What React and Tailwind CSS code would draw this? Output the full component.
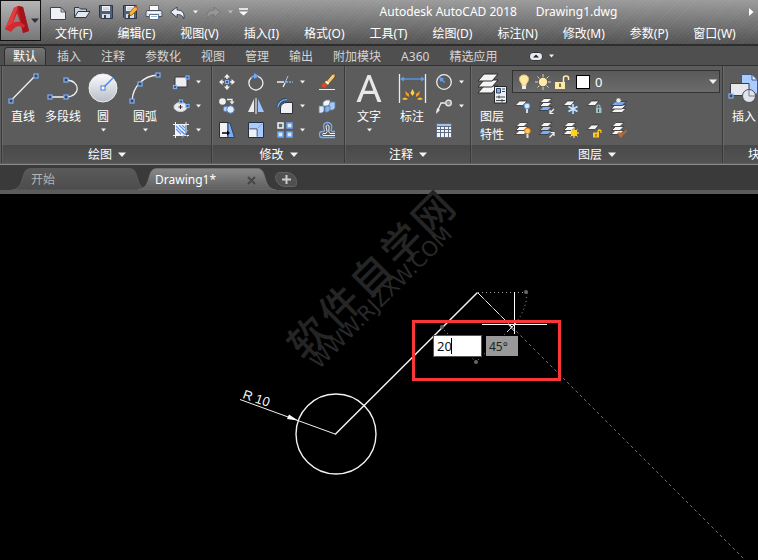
import React from "react";

const FONT = "font-['Noto_Sans','Noto_Sans_CJK_SC',sans-serif]";

/* ---------- shared drawing helpers ---------- */

function Svg({ w = 18, h = 18, children }) {
  return (
    <svg width={w} height={h} viewBox={`0 0 ${w} ${h}`} fill="none" aria-hidden="true" className="block shrink-0">
      {children}
    </svg>
  );
}

function Grip({ x, y, s = 4 }) {
  return <rect x={x - s / 2} y={y - s / 2} width={s} height={s} fill="#3d4652" stroke="#7db0ff" strokeWidth="1.2" />;
}

function Caret({ big, color = "#f2f2f2" }) {
  return big ? (
    <Svg w={8} h={5}>
      <path d="M0 .5H8L4 5Z" fill={color} />
    </Svg>
  ) : (
    <Svg w={5} h={4}>
      <path d="M0 .5H5L2.5 3.5Z" fill={color} />
    </Svg>
  );
}

function Sheets({ top = "#f6f6f6", mid = "#f6f6f6", bottom = "#f6f6f6", y = 0 }) {
  return (
    <g transform={`translate(0 ${y})`} stroke="#333" strokeWidth=".8">
      <path d="M1 13.5 5 9.5H14L10 13.5Z" fill={bottom} />
      <path d="M1.500 9.5 5.500 5.5H14L10 9.5Z" fill={mid} />
      <path d="M2 5.5 6 1.5H14L10 5.5Z" fill={top} />
    </g>
  );
}

const Sheet = () => <path d="M1 8.500 5.500 4H13L9 8.500Z" fill="#f4f4f4" stroke="#333" strokeWidth=".8" />;

/* ---------- quick access icons ---------- */

const NewIcon = () => (
  <Svg>
    <path d="M1.500 4.500H12L16.500 9V16.500H1.500Z" fill="#f0f1f4" stroke="#3c4250" />
    <path d="M12 4.500V9H16.500Z" fill="#c2c7d2" stroke="#3c4250" strokeWidth=".8" />
  </Svg>
);
const OpenIcon = () => (
  <Svg>
    <path d="M1.500 14V4.500H6L7.500 6H13.500V8.500" fill="#c8d0dc" stroke="#303744" />
    <path d="M1.500 14.500 5 8.500H17L13 14.500Z" fill="#e4e8ef" stroke="#303744" />
  </Svg>
);
const DiskBody = () => (
  <>
    <path d="M2.500 2.500H15.500V15.500H4L2.500 14Z" fill="#4f5f78" stroke="#2c3647" />
    <path d="M5 3H13V8H5Z" fill="#f2f4f7" />
    <path d="M6 5H12M6 6.700H12" stroke="#a7afbc" strokeWidth=".7" />
    <path d="M5 11H13V15H5Z" fill="#d5dbe5" />
    <path d="M7 12H9V15H7Z" fill="#344156" />
  </>
);
const SaveIcon = () => (
  <Svg>
    <DiskBody />
  </Svg>
);
const SaveAsIcon = () => (
  <Svg>
    <DiskBody />
    <path d="M7.500 13 8.500 9.500 14 3.500 17 6 11 12Z" fill="#f4b53c" stroke="#8b5a14" strokeWidth=".8" />
    <path d="M14 3.500 15 2.500 17.500 5 17 6Z" fill="#e25a45" />
    <path d="M7.500 13 8 11 9.500 12.300Z" fill="#222" />
  </Svg>
);
const PrintIcon = () => (
  <Svg>
    <path d="M4.500 2.500H13.500V8H4.500Z" fill="#fafafa" stroke="#556" strokeWidth=".8" />
    <path d="M2 7.500H16L17 9V13.500H1V9Z" fill="#dfe4ec" stroke="#4a5260" />
    <path d="M4.500 11.500H13.500V16.500H4.500Z" fill="#fff" stroke="#5b6f91" />
    <path d="M6 13.500H12" stroke="#8eb4ea" />
    <path d="M3 9.500H15" stroke="#fff" />
  </Svg>
);
const UndoIcon = ({ flip, fill = "#eceef2", stroke = "#3e4656" }) => (
  <Svg>
    <path
      transform={flip ? "matrix(-1 0 0 1 18 0)" : undefined}
      d="M1.500 9 8 4V7C13 7 16 9.500 14.800 16C13.500 12.500 12 11.500 8 11.500V14.500Z"
      fill={fill}
      stroke={stroke}
    />
  </Svg>
);

/* ---------- draw panel icons ---------- */

const LineIcon = () => (
  <Svg w={32} h={32}>
    <path d="M4 28.500 28 4" stroke="#f2f2f2" strokeWidth="1.300" />
    <Grip x={4} y={29} />
    <Grip x={29} y={4} />
  </Svg>
);
const PolyIcon = () => (
  <Svg w={32} h={32}>
    <path d="M3 25H19C34 25 34 8 19 8" stroke="#f2f2f2" strokeWidth="1.300" />
    <Grip x={3} y={25} />
    <Grip x={19} y={25} />
    <Grip x={19} y={8} />
  </Svg>
);
const CircleIcon = () => (
  <Svg w={32} h={32}>
    <defs>
      <linearGradient id="disc" x1="0" y1="0" x2="0" y2="1">
        <stop offset="0" stopColor="#fafbfd" />
        <stop offset="1" stopColor="#b9bdc8" />
      </linearGradient>
    </defs>
    <circle cx="16" cy="16" r="14" fill="url(#disc)" stroke="#e9ebf0" />
    <path d="M16 16 26 6" stroke="#3c7fe6" strokeWidth="1.300" />
    <rect x="14" y="14" width="4" height="4" fill="#fff" stroke="#3c7fe6" />
  </Svg>
);
const ArcIcon = () => (
  <Svg w={32} h={32}>
    <path d="M3 29C4 14 14 4 29 3" stroke="#f2f2f2" strokeWidth="1.300" />
    <Grip x={3} y={29} />
    <Grip x={11} y={12} />
    <Grip x={29} y={3} />
  </Svg>
);
const RectIcon = () => (
  <Svg>
    <path d="M3 4H15V14H3Z" fill="#eceef2" stroke="#34383f" />
    <Grip x={3} y={14} s={3} />
    <Grip x={15.500} y={4.500} s={3} />
  </Svg>
);
const EllipseIcon = () => (
  <Svg>
    <ellipse cx="8.500" cy="10" rx="6.500" ry="4.500" fill="#e9ebf0" stroke="#d0d3da" />
    <path d="M8.500 8V12M6.500 10H10.500" stroke="#333" />
    <Grip x={9} y={4.500} s={3} />
    <Grip x={15.500} y={9} s={3} />
  </Svg>
);
const HatchIcon = () => (
  <Svg>
    <path d="M4 4H13V14H4Z" fill="#f4f7fc" />
    <path d="M4 8 9 13M4 5 12 13M7 4 13 10M10 4 13 7" stroke="#5c97ed" strokeWidth="1.200" />
    <path d="M1 3.500H17M1 14.500H17M3.500 1V17M14 1V12" stroke="#f2f2f2" />
    <path d="M10 17 16 9M10 10 16 16" stroke="#6fa7f8" />
  </Svg>
);

/* ---------- modify panel icons ---------- */

const MoveIcon = () => (
  <Svg>
    <path d="M9 1 12 4.500H6ZM9 17 6 13.500H12ZM1 9 4.500 6V12ZM17 9 13.500 12V6Z" fill="#f0f0f0" />
    <path d="M9 4V6M9 12V14M4 9H6M12 9H14" stroke="#f0f0f0" strokeWidth="1.500" />
    <Grip x={9} y={9} s={3} />
  </Svg>
);
const RotateIcon = () => (
  <Svg>
    <path d="M11 3.300A7 7 0 1 1 4.500 4.500" stroke="#ececec" strokeWidth="1.300" />
    <path d="M7 0 12 3 7 6Z" fill="#6ea8fb" />
    <path d="M4 5C5 3.500 6 3 8 3" stroke="#6ea8fb" strokeWidth="1.500" />
  </Svg>
);
const TrimIcon = () => (
  <Svg>
    <path d="M1 9H8M7 14 9 10" stroke="#f0f0f0" strokeWidth="1.300" />
    <path d="M9 10 12 3" stroke="#9ec4ff" />
    <path d="M10 9H17" stroke="#78acf8" strokeWidth="1.300" strokeDasharray="2 1" />
  </Svg>
);
const EraseIcon = () => (
  <Svg>
    <path d="M7 10 14 1.500 17 .5V4L10 12Z" fill="#f2cb78" stroke="#5c421b" strokeWidth=".8" />
    <path d="M7.500 8.500 10.500 11" stroke="#fff" strokeWidth="1.800" />
    <path d="M4 11 7 9.500 9.500 12 7 15 3.500 14Z" fill="#d64b1f" />
    <path d="M1 16.500H17" stroke="#eee" />
  </Svg>
);
const CopyIcon = () => (
  <Svg>
    <circle cx="4.500" cy="4.500" r="3.300" fill="#f0f1f4" />
    <circle cx="8" cy="12" r="2.800" fill="#b5d2ff" stroke="#577db5" />
    <circle cx="12.500" cy="12.500" r="3.800" fill="#dcebff" stroke="#577db5" />
    <path d="M9 2.500H14V5" stroke="#eee" strokeWidth="1.300" />
    <path d="M11.500 4.500H16.500L14 7.500Z" fill="#eee" />
  </Svg>
);
const MirrorIcon = () => (
  <Svg>
    <path d="M7 2V15H1Z" fill="#e7eaf0" />
    <path d="M11 2V15H17Z" fill="#9cc4ff" />
    <path d="M9 1V17" stroke="#fff" />
  </Svg>
);
const FilletIcon = () => (
  <Svg>
    <path d="M4.500 16.500V11Q5 5.500 11 5.500H16.500V16.500Z" fill="#eef0f4" stroke="#2e3238" />
    <path d="M2 10Q3 3 11 2.500" stroke="#23385c" strokeWidth="3" />
    <path d="M2 10Q3 3 11 2.500" stroke="#72a9fa" strokeWidth="1.500" />
  </Svg>
);
const ExplodeIcon = () => (
  <Svg>
    <path d="M1 9H6V14L4 16H1Z" fill="#d5e5fb" stroke="#687d99" strokeWidth=".8" />
    <path d="M5 5 8 3H12V7L10 9H5Z" fill="#eff4fb" stroke="#687d99" strokeWidth=".8" />
    <path d="M11 7 13 5H17V11L15 13H11Z" fill="#a5c8f7" stroke="#687d99" strokeWidth=".8" />
    <path d="M7 10 9 9H12V13L10 15H7Z" fill="#7eb0f3" stroke="#687d99" strokeWidth=".8" />
  </Svg>
);
const StretchIcon = () => (
  <Svg>
    <path d="M1.500 1.500H10V16.500H1.500Z" fill="#f1f2f5" stroke="#2b2f36" />
    <path d="M10 2H12L16.500 16.500H10Z" fill="#78acf5" stroke="#2c4164" />
    <path d="M4 12H10" stroke="#000" strokeWidth="1.500" />
    <path d="M9 9.500 12 12 9 14.500Z" fill="#000" />
  </Svg>
);
const ScaleIcon = () => (
  <Svg>
    <path d="M1.500 1.500H16.500V16.500H1.500Z" fill="#a9caff" stroke="#26303f" />
    <path d="M2.500 8H10V15.500" stroke="#333c49" />
    <path d="M2 8.500H9.500V16H2Z" fill="#edf0f5" />
    <path d="M11 7 15 3" stroke="#7ba7e5" />
  </Svg>
);
const ArrayIcon = () => (
  <Svg>
    <rect x="2" y="2" width="5" height="5" fill="#596678" stroke="#f4f4f4" strokeWidth="1.500" />
    <rect x="11" y="2" width="5" height="5" fill="#d8e8ff" stroke="#69a2f5" strokeWidth="1.500" />
    <rect x="2" y="11" width="5" height="5" fill="#d8e8ff" stroke="#69a2f5" strokeWidth="1.500" />
    <rect x="11" y="11" width="5" height="5" fill="#d8e8ff" stroke="#69a2f5" strokeWidth="1.500" />
  </Svg>
);
const OffsetIcon = () => (
  <Svg>
    <path d="M17 16.500H4Q1.500 16.500 1.500 13.500T4 10.500H6Q7 10 6 8Q4 2 9.500 1.500Q15 2 13.500 8Q12.500 10 14 10.500H17" stroke="#76abfa" strokeWidth="1.300" />
    <path d="M17 14.500H5Q4 13.500 5 12.500H8Q10 11 8.500 8Q7 4 9.500 4T11 8Q10 11 12 12.500H17" stroke="#f0f0f0" />
  </Svg>
);

/* ---------- annotation icons ---------- */

const TextIcon = () => (
  <Svg w={32} h={32}>
    <path d="M3.500 30 14.500 3H17.500L28.500 30H24.500L21.500 22H10.500L7.500 30ZM11.700 18.800H20.300L16 7.200Z" fill="#e8e8e8" fillRule="evenodd" />
  </Svg>
);
const DimIcon = () => (
  <Svg w={32} h={32}>
    <path d="M3.500 2V31M29.500 2V31" stroke="#ececec" strokeWidth="1.300" />
    <path d="M5 7H28" stroke="#589bf8" strokeWidth="1.300" />
    <path d="M4 7 8 4.500V9.500ZM29 7 25 4.500V9.500Z" fill="#589bf8" />
    <path d="M16.500 17 18.500 21 16.500 24 14.500 21Z" fill="#ffd34c" />
    <path d="M9 19 13 22 13 25 10 23ZM24 19 20 22V25L23 23Z" fill="#f39b2b" />
    <path d="M6 27Q9 24 12 27Q9 29 6 27ZM27 27Q24 24 21 27Q24 29 27 27Z" fill="#ffb52f" />
  </Svg>
);
const RadiusIcon = () => (
  <Svg>
    <circle cx="9" cy="9" r="7.300" stroke="#ececec" strokeWidth="1.300" />
    <path d="M9.500 9.500 6 6" stroke="#62a0f8" strokeWidth="1.300" />
    <path d="M4 4 9 5.500 5.500 9Z" fill="#62a0f8" />
  </Svg>
);
const LeaderIcon = () => (
  <Svg>
    <path d="M2 15 6 6H10" stroke="#ececec" strokeWidth="1.300" />
    <path d="M1 17 2 11 5 13Z" fill="#ececec" />
    <circle cx="13.500" cy="6" r="2.800" fill="#8c9096" stroke="#ececec" strokeWidth="1.300" />
  </Svg>
);
const TableIcon = () => (
  <Svg>
    <path d="M1 2H17V17H1Z" fill="#5d6c83" />
    <path d="M2 3H16V5H2Z" fill="#a9bfe0" />
    <path d="M2 6H5V8H2ZM6 6H9V8H6ZM10 6H13V8H10ZM14 6H16V8H14ZM2 9H5V11H2ZM6 9H9V11H6ZM10 9H13V11H10ZM14 9H16V11H14ZM2 12H5V16H2ZM6 12H9V16H6ZM10 12H13V16H10ZM14 12H16V16H14Z" fill="#f2f3f5" />
  </Svg>
);

/* ---------- layer icons ---------- */

const LayerPropsIcon = () => (
  <Svg w={32} h={32}>
    <g fill="#f5f5f5" stroke="#2d2d2d">
      <path d="M2 21 8 14H22L16 21Z" />
      <path d="M2 15 8 8H22L16 15Z" />
      <path d="M2 9 8 2H22L16 9Z" />
    </g>
    <path d="M18.500 14.500H30.500V31H18.500Z" fill="#edf1f7" stroke="#22272f" />
    <path d="M20.500 16.500H24.500V21H20.500Z" fill="#7fb2fa" stroke="#33435a" />
    <path d="M26 17H29M26 19.500H29M20 25H29M20 28.500H29" stroke="#444" />
    <path d="M23 23.500V26.500M26 27V30" stroke="#444" />
  </Svg>
);
const LayerOffIcon = () => (
  <Svg>
    <Sheet />
    <circle cx="13" cy="9" r="2.800" fill="#d3e9ff" stroke="#629be0" />
    <path d="M12 12H14V16H12Z" fill="#d8dce2" />
  </Svg>
);
const LayerIsoIcon = () => (
  <Svg>
    <Sheets bottom="#78aef8" />
    <path d="M16 12 12 16M12 13V16.500H15.500" stroke="#f2f2f2" strokeWidth="1.200" />
  </Svg>
);
const LayerFreezeIcon = () => (
  <Svg>
    <Sheet />
    <circle cx="11" cy="12" r="4.500" fill="#496483" />
    <path d="M11 7V17M6.500 9.500 15.500 14.500M15.500 9.500 6.500 14.500" stroke="#cee5ff" strokeWidth="1.500" />
  </Svg>
);
const LayerLockIcon = () => (
  <Svg>
    <Sheet />
    <path d="M11 11V9.500Q11 8 12.500 8T14 9.500V11" stroke="#9ec0bd" strokeWidth="1.200" />
    <path d="M10 11H15.500V16H10Z" fill="#9ec0bd" />
    <path d="M12.500 12V15" stroke="#456" />
  </Svg>
);
const LayerCurrentIcon = () => (
  <Svg>
    <g stroke="#333" strokeWidth=".8">
      <path d="M1 15.500 5 11.500H16L12 15.500Z" fill="#f6f6f6" />
      <path d="M1 12 5 8H16L12 12Z" fill="#f6f6f6" />
      <path d="M1 8.500 5 4.500H16.500L12 8.500Z" fill="#75abf2" />
    </g>
    <circle cx="8.500" cy="3.500" r="2.500" fill="#e8e8e8" stroke="#777" strokeWidth=".7" />
  </Svg>
);
const LayerOnIcon = () => (
  <Svg>
    <Sheets />
    <circle cx="13.500" cy="10" r="2.800" fill="#ffd15b" stroke="#f07a19" />
    <path d="M12.500 13H14.500V17H12.500Z" fill="#dedede" />
  </Svg>
);
const LayerUnisoIcon = () => (
  <Svg>
    <Sheets bottom="#78aef8" mid="#b9c8dc" />
    <path d="M11.500 16.500 16 12M12.500 11.500H16V15" stroke="#f2f2f2" strokeWidth="1.200" />
  </Svg>
);
const LayerThawIcon = () => (
  <Svg>
    <Sheets />
    <path d="M12 7V17M7 12H17M8.500 8.500 15.500 15.500M15.500 8.500 8.500 15.500" stroke="#ffe99b" />
    <circle cx="12" cy="12" r="3.300" fill="#ffd617" />
  </Svg>
);
const LayerUnlockIcon = () => (
  <Svg>
    <Sheet />
    <path d="M12 12V10.500Q12 9 13.500 9T15 10.500V12" stroke="#ffc928" strokeWidth="1.300" />
    <path d="M7 11.500H13V16.500H7Z" fill="#ffc928" />
    <path d="M10 13V15.500" stroke="#6b4b0a" />
  </Svg>
);
const LayerMatchIcon = () => (
  <Svg>
    <Sheets />
    <path d="M7 12 10 11 13 14 11 17Z" fill="#c6692a" />
    <path d="M11 12.500 13 13 16.500 9.500" stroke="#b8672c" strokeWidth="2" />
  </Svg>
);
const BulbIcon = () => (
  <Svg>
    <path d="M7 11C3 7 4 2 9 2S15 7 11 11V13H7Z" fill="#ffe9a2" stroke="#e4c875" />
    <path d="M7 13H11V16H7Z" fill="#f0f0f0" />
  </Svg>
);
const SunIcon = () => (
  <Svg>
    <path d="M9 1V17M1 9H17M3.500 3.500 14.500 14.500M14.500 3.500 3.500 14.500" stroke="#d9d3c0" />
    <circle cx="9" cy="9" r="5" fill="#5b5b5b" />
    <circle cx="9" cy="9" r="4.200" fill="#ffe9a8" />
  </Svg>
);
const UnlockIcon = () => (
  <Svg>
    <path d="M10.500 9V5Q10.500 3 13 3T15.500 5V7" stroke="#ffeeb5" strokeWidth="1.500" />
    <path d="M2 9H12V16H2Z" fill="#ffe9a8" />
    <path d="M7 10.500V14" stroke="#4a4230" strokeWidth="1.500" />
  </Svg>
);
const InsertIcon = () => (
  <Svg w={32} h={32}>
    <path d="M13.500 2.500H24L29.500 8V22H13.500Z" fill="#a9cbff" stroke="#43597a" />
    <path d="M24 2.500V8H29.500Z" fill="#e9f2ff" stroke="#43597a" />
    <path d="M2.500 11.500H21V23.500H2.500Z" fill="#e6e8ee" stroke="#3a3e46" />
    <circle cx="21" cy="24" r="6.500" fill="#e0e3ea" stroke="#4a4f59" />
    <path d="M21 24V18M21 24H27" stroke="#777e8b" />
    <Grip x={3} y={24} />
  </Svg>
);

/* ---------- ribbon building blocks ---------- */

function Panel({ title, className = "", children, noCaret, titleClass = "justify-center" }) {
  return (
    <section className={`flex shrink-0 flex-col overflow-hidden border-l border-[#3a3a3a] ${className}`}>
      <div className="flex min-h-0 flex-1 border-l border-[#696969] bg-[#5c5c5c] pt-1">{children}</div>
      <button
        type="button"
        className={`flex h-[18px] shrink-0 items-center gap-1.5 border-l border-[#5c5c5c] bg-linear-to-b from-[#494949] to-[#535353] pt-px text-xs leading-4 text-white ${titleClass}`}
      >
        {title}
        {!noCaret && <Caret big />}
      </button>
    </section>
  );
}

function LargeButton({ icon, label, caret, className = "w-10" }) {
  return (
    <button type="button" className={`flex shrink-0 flex-col items-center justify-start pt-0.5 text-xs leading-4 text-white ${className}`}>
      {icon}
      <span className="mt-1 whitespace-nowrap leading-[18px]">{label}</span>
      {caret && <span className="pt-0.5"><Caret /></span>}
    </button>
  );
}

function SmallButton({ icon, label, caret, className = "" }) {
  return (
    <button type="button" aria-label={label} className={`flex h-6 items-center gap-1.5 pl-0.5 ${className}`}>
      {icon}
      {caret && <Caret />}
    </button>
  );
}

function FileTab({ active, className, children }) {
  return (
    <div className={`relative flex h-[22px] shrink-0 items-center pt-0.5 text-xs ${className}`}>
      <svg viewBox="0 0 140 22" preserveAspectRatio="none" className="absolute inset-0 h-full w-full" aria-hidden="true">
        <defs>
          <linearGradient id={active ? "tabOn" : "tabOff"} x1="0" y1="0" x2="0" y2="1">
            <stop offset="0" stopColor={active ? "#8a8a8a" : "#5a5a5a"} />
            <stop offset="1" stopColor={active ? "#5e5e5e" : "#4c4c4c"} />
          </linearGradient>
        </defs>
        <path
          d="M0 22C7 21 9 17 11 10C13 3 14 .5 20 .5H120C126 .5 127 3 129 10C131 17 133 21 140 22Z"
          fill={active ? "url(#tabOn)" : "url(#tabOff)"}
          stroke={active ? "#777" : "#626262"}
          strokeWidth=".7"
        />
      </svg>
      {children}
    </div>
  );
}

const menus = ["文件(F)", "编辑(E)", "视图(V)", "插入(I)", "格式(O)", "工具(T)", "绘图(D)", "标注(N)", "修改(M)", "参数(P)", "窗口(W)"];
const ribbonTabs = ["插入", "注释", "参数化", "视图", "管理", "输出", "附加模块", "A360", "精选应用"];
const quick = [
  ["新建", <NewIcon />],
  ["打开", <OpenIcon />],
  ["保存", <SaveIcon />],
  ["另存为", <SaveAsIcon />],
  ["打印", <PrintIcon />],
];
const modifyRows = [
  [["移动", <MoveIcon />], ["旋转", <RotateIcon />], ["修剪", <TrimIcon />], ["删除", <EraseIcon />]],
  [["复制", <CopyIcon />], ["镜像", <MirrorIcon />], ["圆角", <FilletIcon />], ["分解", <ExplodeIcon />]],
  [["拉伸", <StretchIcon />], ["缩放", <ScaleIcon />], ["阵列", <ArrayIcon />], ["偏移", <OffsetIcon />]],
];
const layerTools = [
  ["关", <LayerOffIcon />],
  ["隔离", <LayerIsoIcon />],
  ["冻结", <LayerFreezeIcon />],
  ["锁定", <LayerLockIcon />],
  ["置为当前", <LayerCurrentIcon />],
  ["打开所有图层", <LayerOnIcon />],
  ["取消隔离", <LayerUnisoIcon />],
  ["解冻", <LayerThawIcon />],
  ["解锁", <LayerUnlockIcon />],
  ["匹配图层", <LayerMatchIcon />],
];

function Header() {
  return (
    <header className="flex h-[46px] shrink-0 overflow-hidden border-b-2 border-[#2d2d2d] bg-[repeating-linear-gradient(135deg,rgba(255,255,255,0.04)_0px,rgba(255,255,255,0.04)_1px,transparent_1px,transparent_3px),linear-gradient(to_bottom,#9b9b9b,#525252)]">
      <button
        type="button"
        aria-label="应用程序菜单"
        className="flex h-[41px] w-[41px] shrink-0 items-center border border-[#111] bg-linear-to-b from-[#b5b5b5] to-[#777] pl-0.5"
      >
        <Svg w={28} h={32}>
          <path d="M2 24 11 3 15 1 20 2 26 26 20 28 18 21Q12 19 8 26Z" fill="#c81f25" />
          <path d="M14 8 10 18Q13 16 17 17Z" fill="#8d8585" />
          <path d="M2 24 11 3 15 1 8 23Z" fill="#e23b40" />
          <path d="M15 1 20 2 26 26 20 28Z" fill="#a3151b" />
          <path d="M2 24Q12 13 22 20L21 23Q14 18 8 27Z" fill="#d22a30" />
        </Svg>
        <Caret big color="#2c3440" />
      </button>
      <div className="flex min-w-0 flex-1 flex-col">
        <div className="flex h-[23px] shrink-0 items-center pl-2">
          <div className="flex shrink-0 items-center gap-1.5">
            {quick.map(([label, icon]) => (
              <button key={label} type="button" aria-label={label}>{icon}</button>
            ))}
            <button type="button" aria-label="放弃" className="flex items-center gap-1.5"><UndoIcon /><Caret /></button>
            <button type="button" aria-label="重做" className="flex items-center gap-1.5">
              <UndoIcon flip fill="#969696" stroke="#777" />
              <Caret color="#bbb" />
            </button>
            <button type="button" aria-label="自定义快速访问工具栏">
              <Svg w={9} h={8}>
                <path d="M0 1H9" stroke="#fff" strokeWidth="1.500" />
                <path d="M0 3.500H9L4.500 7.500Z" fill="#fff" />
              </Svg>
            </button>
          </div>
          <h1 className="min-w-0 flex-1 truncate pt-px text-center text-[12px] leading-4 whitespace-pre text-white">
            {"Autodesk AutoCAD 2018      Drawing1.dwg"}
          </h1>
          <button type="button" aria-label="更多" className="shrink-0 pr-1">
            <Svg w={5} h={8}><path d="M0 0 4.500 4 0 8Z" fill="#fff" /></Svg>
          </button>
        </div>
        <nav className="flex min-h-0 flex-1 items-end gap-[25px] overflow-hidden pl-3.5 text-xs leading-5 text-white">
          {menus.map((m) => (
            <button key={m} type="button" className="shrink-0 whitespace-nowrap">{m}</button>
          ))}
        </nav>
      </div>
    </header>
  );
}

function RibbonTabs() {
  return (
    <nav className="flex h-5 shrink-0 items-end overflow-hidden border-b border-[#333] bg-[#4f4f4f] pl-1 text-xs leading-4 text-[#d5d5d5]">
      <button type="button" className="h-[18px] w-[42px] shrink-0 rounded-t-sm border border-b-0 border-[#2e2e2e] bg-linear-to-b from-[#747474] to-[#5c5c5c] pt-px text-white">
        默认
      </button>
      <div className="flex h-[18px] shrink-0 items-center gap-5 pt-0.5 pl-[11px]">
        {ribbonTabs.map((t) => (
          <button key={t} type="button" className="whitespace-nowrap">{t}</button>
        ))}
      </div>
      <button type="button" aria-label="最小化功能区" className="flex h-[18px] items-center gap-1.5 pl-8">
        <span className="flex h-[9px] w-[14px] items-center justify-center rounded-sm border border-[#30353d] bg-[#e8eaee]">
          <Svg w={6} h={4}><path d="M0 3.500H6L3 .5Z" fill="#222" /></Svg>
        </span>
        <Caret />
      </button>
    </nav>
  );
}

function Ribbon() {
  return (
    <div className="flex h-[99px] shrink-0 overflow-hidden border-b border-[#8c8c8c] bg-[#5c5c5c] pb-px pl-px">
      <Panel title="绘图" className="w-[210px]">
        <LargeButton icon={<LineIcon />} label="直线" />
        <LargeButton icon={<PolyIcon />} label="多段线" />
        <LargeButton icon={<CircleIcon />} label="圆" caret />
        <LargeButton icon={<ArcIcon />} label="圆弧" caret className="w-11" />
        <div className="flex flex-col pl-[3px]">
          <SmallButton label="矩形" icon={<RectIcon />} caret />
          <SmallButton label="椭圆" icon={<EllipseIcon />} caret />
          <SmallButton label="图案填充" icon={<HatchIcon />} caret />
        </div>
      </Panel>
      <Panel title="修改" className="w-[133px]">
        <div className="flex flex-col pl-[3px]">
          {modifyRows.map((row, r) => (
            <div key={r} className="flex">
              {row.map(([label, icon], c) => (
                <SmallButton key={label} label={label} icon={icon} caret={c === 2} className={c === 2 ? "w-[42px]" : "w-[29px]"} />
              ))}
            </div>
          ))}
        </div>
      </Panel>
      <Panel title="注释" className="w-[126px]">
        <LargeButton icon={<TextIcon />} label="文字" caret className="w-[46px]" />
        <LargeButton icon={<DimIcon />} label="标注" className="w-10" />
        <div className="flex flex-col pl-px">
          <SmallButton label="半径" icon={<RadiusIcon />} caret />
          <SmallButton label="引线" icon={<LeaderIcon />} caret />
          <SmallButton label="表格" icon={<TableIcon />} />
        </div>
      </Panel>
      <Panel title="图层" className="w-[252px]">
        <LargeButton icon={<LayerPropsIcon />} label={<>图层<br />特性</>} className="w-10" />
        <div className="flex min-w-0 flex-1 flex-col">
          <div className="mr-0.5 flex h-[23px] shrink-0 items-center gap-px border border-[#333] bg-linear-to-b from-[#5a5a5a] to-[#6b6b6b] pl-0.5">
            <BulbIcon />
            <SunIcon />
            <UnlockIcon />
            <span className="mx-1 h-[14px] w-[14px] border border-black bg-white" />
            <select aria-label="当前图层" defaultValue="0" className="h-full min-w-0 flex-1 appearance-none bg-transparent text-[13px] leading-4 text-white">
              <option>0</option>
            </select>
            <span className="pointer-events-none pr-0.5"><Caret big /></span>
          </div>
          <div className="grid grid-cols-[repeat(5,24px)] pt-px">
            {layerTools.map(([label, icon]) => (
              <SmallButton key={label} label={label} icon={icon} />
            ))}
          </div>
        </div>
      </Panel>
      <Panel title="块" className="min-w-9 flex-1" titleClass="justify-start pl-6" noCaret>
        <LargeButton icon={<InsertIcon />} label="插入" className="w-10" />
      </Panel>
    </div>
  );
}

function FileTabs() {
  return (
    <div className="flex h-[29px] shrink-0 items-end overflow-hidden border-b-4 border-[#5c5c5c] bg-[#3a3a3a] pl-3">
      <FileTab className="w-[136px] text-[#b5b5b5]">
        <button type="button" className="relative pl-[19px]">开始</button>
      </FileTab>
      <FileTab active className="-ml-2.5 w-[138px] text-white">
        <button type="button" className="relative flex-1 pl-[17px] text-left">Drawing1*</button>
        <button type="button" aria-label="关闭" className="relative mr-5">
          <Svg w={9} h={9}><path d="M1 1 8 8M8 1 1 8" stroke="#474747" strokeWidth="2" /></Svg>
        </button>
      </FileTab>
      <button type="button" aria-label="新图形" className="-ml-px mb-[3px] flex h-[15px] w-[22px] items-center justify-center rounded-tl-md rounded-tr-xl rounded-br-sm rounded-bl-xl border border-[#626262] bg-[#505050]">
        <Svg w={9} h={9}><path d="M4.500 0V9M0 4.500H9" stroke="#ccc" strokeWidth="2" /></Svg>
      </button>
    </div>
  );
}

function Canvas() {
  return (
    <main className="relative min-h-[366px] flex-1 bg-black">
      <svg className="absolute inset-0 h-full w-full overflow-visible" aria-label="图形">
        <g transform="translate(319 154) rotate(-45)" fill="#252525" className="font-['Noto_Sans_CJK_SC',sans-serif]">
          {[..."软件自学网"].map((c, i) => (
            <text key={c} x={i * 44} y="0" fontSize="40" fontWeight="500" textAnchor="middle">{c}</text>
          ))}
        </g>
        <text transform="translate(319 176) rotate(-45)" fill="#292929" fontSize="21" className="font-['DejaVu_Sans',sans-serif]">WWW.RJZXW.COM</text>
        <g fill="none" stroke="#f2f2f2">
          <circle cx="336" cy="240" r="40" strokeWidth="1.400" />
          <path d="M335 240.500 477.500 98.500" strokeWidth="1.500" />
          <path d="M335 240 240 205.500" />
        </g>
        <path d="M298 226.500 287 225 289 220.500Z" fill="#fff" />
        <text transform="translate(242 204) rotate(19)" fill="#f2f2f2" fontSize="13" className="font-['Liberation_Sans',sans-serif]">R 10</text>
        <path d="M478 98.500H525M527 99A50 50 0 0 1 512 133L476 168 441 133" fill="none" stroke="#a0a0a0" strokeDasharray="1 3" />
        <path d="M478 99 512 133" stroke="#36a336" />
        <path d="M478 99 512 133" stroke="#f2f2f2" strokeDasharray="8 3" />
        <path d="M512 133 745 366" stroke="#4f8a4f" strokeDasharray="3 3" />
        <g fill="#666">
          <circle cx="526" cy="98" r="2" />
          <circle cx="476" cy="168" r="2" />
          <circle cx="442" cy="133" r="2" />
        </g>
        <path d="M514.500 98V140M482 130.500H547" stroke="#fff" />
        <path d="M507 138 516 129M508 130 515 138" stroke="#ddd" />
      </svg>
      <div className="absolute top-[126px] left-[412px] h-[61px] w-[149px] border-3 border-[#fa3636]" />
      <div className="absolute top-[141px] left-[433px] flex items-center gap-1">
        <div className="relative">
          <input
            aria-label="长度"
            defaultValue="20"
            className="block h-[22px] w-[49px] border border-[#555] bg-white px-[3px] text-[13px] leading-4 text-[#111]"
          />
          <span className="absolute top-[3px] left-[18px] h-4 w-px bg-black" />
        </div>
        <input
          aria-label="角度"
          readOnly
          value="45°"
          className="block h-5 w-8 bg-[#999] px-[3px] text-[12px] leading-4 text-[#222]"
        />
      </div>
    </main>
  );
}

export default function App() {
  return (
    <div className={`flex min-h-screen flex-col overflow-hidden bg-black ${FONT}`}>
      <Header />
      <RibbonTabs />
      <Ribbon />
      <FileTabs />
      <Canvas />
    </div>
  );
}
